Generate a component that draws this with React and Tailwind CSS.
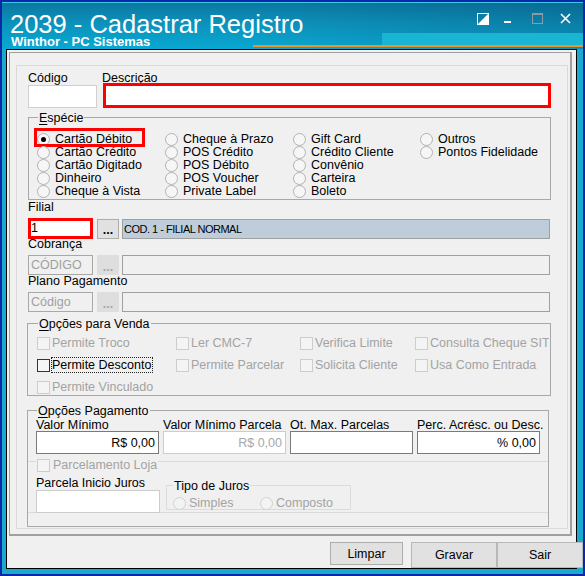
import React from "react";

function Legend({ children, className = "" }) {
  return (
    <div className={`-mt-[7px] h-[14px] w-fit px-[1px] bg-[#f0f0f0] whitespace-nowrap ${className}`}>
      {children}
    </div>
  );
}

function Radio({ checked, disabled }) {
  return (
    <span
      className={`w-[13px] h-[13px] rounded-full border shrink-0 flex items-center justify-center ${
        disabled ? "border-[#d2d2d2] bg-[#f3f3f3]" : "border-[#b2b2b2] bg-[#f6f6f6]"
      }`}
    >
      {checked && <span className="w-[5px] h-[5px] rounded-full bg-black" />}
    </span>
  );
}

function Check({ enabled }) {
  return (
    <span
      className={`w-[13px] h-[13px] border shrink-0 ${
        enabled ? "border-[#333333] bg-[#f6f6f6]" : "border-[#cdcdcd] bg-[#f4f4f4]"
      }`}
    />
  );
}

const especie = [
  { w: "w-[128px]", items: ["Cartão Débito", "Cartão Crédito", "Cartão Digitado", "Dinheiro", "Cheque à Vista"] },
  { w: "w-[128px]", items: ["Cheque à Prazo", "POS Crédito", "POS Débito", "POS Voucher", "Private Label"] },
  { w: "w-[127px]", items: ["Gift Card", "Crédito Cliente", "Convênio", "Carteira", "Boleto"] },
  { w: "w-[120px]", items: ["Outros", "Pontos Fidelidade"] },
];

const venda = [
  { w: "w-[139px]", items: [["Permite Troco", false], ["Permite Desconto", true], ["Permite Vinculado", false]] },
  { w: "w-[124px]", items: [["Ler CMC-7", false], ["Permite Parcelar", false]] },
  { w: "w-[115px]", items: [["Verifica Limite", false], ["Solicita Cliente", false]] },
  { w: "w-[134px] overflow-hidden", items: [["Consulta Cheque SIT", false], ["Usa Como Entrada", false]] },
];

function TitleBar() {
  return (
    <div className="h-[47px] flex border-t border-[#3cc8e6] bg-[linear-gradient(90deg,rgba(0,0,0,0)_45%,rgba(0,30,60,0.16)_100%),linear-gradient(180deg,#0b78a2_0%,#0c92bb_45%,#08a8d2_100%)]">
      <div className="w-[251px] pl-[8px] pt-[9px] flex flex-col text-white">
        <div className="text-[25.5px] leading-[24px] whitespace-nowrap">2039 - Cadastrar Registro</div>
        <div className="ml-[1px] text-[13px] leading-[11px] font-bold whitespace-nowrap">
          Winthor - PC Sistemas
        </div>
      </div>
      <div className="flex-1 flex flex-col pt-[10px]">
        <div className="flex items-start h-[12px] ml-[224px]">
          <svg width="12" height="12" viewBox="0 0 12 12" className="shrink-0">
            <polygon points="0,12 12,0 12,12" fill="#ffffff" />
            <rect x="0.5" y="0.5" width="11" height="11" fill="none" stroke="#ffffff" strokeWidth="1" />
          </svg>
          <span className="ml-[15px] mt-[8px] w-[7px] h-[2px] bg-white shrink-0" />
          <svg width="11" height="11" viewBox="0 0 11 11" className="ml-[21px] shrink-0">
            <rect x="0.5" y="0.5" width="10" height="10" fill="none" stroke="#8c9aa2" strokeWidth="1" />
            <rect x="0" y="0" width="11" height="2" fill="#8c9aa2" />
          </svg>
          <svg width="11" height="11" viewBox="0 0 11 11" className="ml-[17px] shrink-0">
            <path d="M1 1 L10 10 M10 1 L1 10" stroke="#ffffff" strokeWidth="1.6" />
          </svg>
        </div>
        <div className="mt-[8px] ml-[129px] h-[12px] bg-[#1ab5d2]" />
        <div className="h-[2px] bg-[#e8962a]" />
      </div>
    </div>
  );
}

export default function App() {
  return (
    <div className="w-[585px] h-[576px] bg-[#0a28a8] p-[2px] font-['Liberation_Sans',Arial,sans-serif] text-[12.5px] leading-[14px] text-black overflow-hidden">
      <div className="w-[581px] h-[572px] bg-[#19aad0] flex flex-col">
        <TitleBar />
        <div className="ml-[4px] w-[571px] h-[520px] border border-black bg-[#f0f0f0] flex flex-col">
          <div className="ml-[2px] mt-[2px] w-[563px] h-[485px] border-l border-t border-r-2 border-b-2 border-[#a0a0a0]">
            <div className="ml-[6px] mt-[12px] w-[552px] h-[464px] border border-[#dadada] flex flex-col">
              {/* Código / Descrição */}
              <div className="flex mt-[5px]">
                <div className="ml-[11px] w-[69px] flex flex-col">
                  <div className="h-[14px] pt-[1px] leading-[13px]">Código</div>
                  <div className="h-[23px] border border-[#d0d0d0] bg-white" />
                </div>
                <div className="ml-[6px] flex flex-col">
                  <div className="h-[12px] -ml-[1px] pt-[1px] leading-[13px]">Descrição</div>
                  <div className="h-[25px] w-[448px] border-[3px] border-[#ff0000] bg-white" />
                </div>
              </div>

              {/* Espécie */}
              <div className="mt-[9px] ml-[11px] w-[523px] h-[83px] border border-[#a8a8a8] flex flex-col">
                <Legend className="ml-[9px]">
                  <span className="underline underline-offset-[2px]">E</span>spécie
                </Legend>
                <div className="flex mt-[8px] pl-[8px]">
                  {especie.map((col, ci) => (
                    <div key={ci} className={`${col.w} flex flex-col`}>
                      {col.items.map((t, i) => (
                        <div key={t} className="relative h-[13px] flex items-center leading-[13px] whitespace-nowrap">
                          <Radio checked={ci === 0 && i === 0} />
                          <span className="ml-[5px]">{t}</span>
                          {ci === 0 && i === 0 && (
                            <span className="absolute -left-[3px] -top-[5px] w-[111px] h-[19px] border-[3px] border-[#ff0000]" />
                          )}
                        </div>
                      ))}
                    </div>
                  ))}
                </div>
              </div>

              {/* Filial */}
              <div className="ml-[11px] h-[14px] pt-[1px] leading-[13px]">Filial</div>
              <div className="mt-[4px] ml-[11px] flex items-end h-[21px]">
                <div className="w-[65px] h-[21px] border-[3px] border-[#ff0000] bg-white flex items-center leading-[13px]">1</div>
                <div className="ml-[4px] w-[22px] h-[20px] bg-[#e1e1e1] border border-[#adadad] flex items-end justify-center pb-[3px] font-bold leading-[10px]">
                  ...
                </div>
                <div className="ml-[3px] w-[428px] h-[20px] bg-[#bfcdda] border border-[#a0a0a0] flex items-center pl-[1px] text-[11px] tracking-[-0.5px] leading-[12px]">
                  COD. 1 - FILIAL NORMAL
                </div>
              </div>

              {/* Cobrança */}
              <div className="-mt-[2px] ml-[11px] h-[14px]">Cobrança</div>
              <div className="mt-[4px] ml-[11px] flex h-[20px]">
                <div className="w-[65px] h-[20px] border border-[#a8a8a8] bg-[#f0f0f0] flex items-center pl-[2px] text-[#a0a0a0] leading-[13px]">
                  CÓDIGO
                </div>
                <div className="ml-[4px] w-[22px] h-[20px] bg-[#dedede] flex items-end justify-center pb-[3px] font-bold leading-[10px] text-[#a8a8a8]">
                  ...
                </div>
                <div className="ml-[3px] w-[428px] h-[20px] bg-[#f0f0f0] border border-[#a0a0a0]" />
              </div>

              {/* Plano Pagamento */}
              <div className="-mt-[1px] ml-[11px] h-[14px]">Plano Pagamento</div>
              <div className="mt-[4px] ml-[11px] flex h-[20px]">
                <div className="w-[65px] h-[20px] border border-[#a8a8a8] bg-[#f0f0f0] flex items-center pl-[2px] text-[#a0a0a0] leading-[13px]">
                  Código
                </div>
                <div className="ml-[4px] w-[22px] h-[20px] bg-[#dedede] flex items-end justify-center pb-[3px] font-bold leading-[10px] text-[#a8a8a8]">
                  ...
                </div>
                <div className="ml-[3px] w-[428px] h-[20px] bg-[#f0f0f0] border border-[#a0a0a0]" />
              </div>

              {/* Opções para Venda */}
              <div className="mt-[11px] ml-[10px] w-[524px] h-[73px] border border-[#a8a8a8] flex flex-col">
                <Legend className="ml-[10px]">
                  <span className="underline underline-offset-[2px]">O</span>pções para Venda
                </Legend>
                <div className="flex mt-[1px] pl-[9px]">
                  {venda.map((col, ci) => (
                    <div key={ci} className={`${col.w} flex flex-col`}>
                      {col.items.map(([t, en]) => (
                        <div key={t} className="h-[22px] flex items-center whitespace-nowrap">
                          <Check enabled={en} />
                          <span
                            className={`ml-[1px] h-[16px] flex items-center border ${
                              en ? "border-dotted border-[#222222] text-black pr-[1px]" : "border-transparent text-[#a3a3a3]"
                            }`}
                          >
                            {t}
                          </span>
                        </div>
                      ))}
                    </div>
                  ))}
                </div>
              </div>

              {/* Opções Pagamento */}
              <div className="mt-[14px] ml-[10px] w-[522px] h-[117px] border border-[#a8a8a8] flex flex-col">
                <Legend className="ml-[9px]">
                  <span className="underline underline-offset-[2px]">O</span>pções Pagamento
                </Legend>
                <div className="flex pl-[8px] gap-[4px]">
                  {[
                    ["Valor Mínimo", "R$ 0,00", "border-[#7a7a7a] text-black"],
                    ["Valor Mínimo Parcela", "R$ 0,00", "border-[#cccccc] text-[#a8a8a8]"],
                    ["Ot. Max. Parcelas", "", "border-[#7a7a7a] text-black"],
                    ["Perc. Acrésc. ou Desc.", "% 0,00", "border-[#7a7a7a] text-black"],
                  ].map(([l, v, c]) => (
                    <div key={l} className="w-[123px] flex flex-col">
                      <div className="h-[13px] whitespace-nowrap">{l}</div>
                      <div className={`h-[23px] border bg-white flex items-center justify-end pr-[3px] ${c}`}>{v}</div>
                    </div>
                  ))}
                </div>

                <div className="mt-[7px] h-[52px] border-y border-[#dadada] flex flex-col">
                  <div className="-mt-[4px] ml-[8px] h-[14px] w-fit px-[1px] bg-[#f0f0f0] flex items-center">
                    <Check />
                    <span className="ml-[3px] text-[#a3a3a3] whitespace-nowrap">Parcelamento Loja</span>
                  </div>
                  <div className="flex items-start mt-[4px]">
                    <div className="ml-[8px] w-[124px] flex flex-col">
                      <div className="h-[14px] whitespace-nowrap">Parcela Inicio Juros</div>
                      <div className="h-[23px] border border-[#cccccc] bg-white" />
                    </div>
                    <div className="ml-[6px] mt-[9px] w-[185px] h-[25px] border border-[#dcdcdc] flex flex-col">
                      <Legend className="ml-[6px]">Tipo de Juros</Legend>
                      <div className="flex mt-[4px] ml-[6px]">
                        <div className="w-[87px] h-[13px] flex items-center text-[#a3a3a3] leading-[13px]">
                          <Radio disabled />
                          <span className="ml-[3px]">Simples</span>
                        </div>
                        <div className="h-[13px] flex items-center text-[#a3a3a3] leading-[13px]">
                          <Radio disabled />
                          <span className="ml-[3px]">Composto</span>
                        </div>
                      </div>
                    </div>
                  </div>
                </div>
              </div>
            </div>
          </div>

          {/* Buttons */}
          <div className="flex items-start mt-[6px] ml-[323px]">
            <div className="w-[73px] h-[23px] bg-[#e1e1e1] border border-[#adadad] flex items-center justify-center shrink-0">
              Limpar
            </div>
            <div className="ml-[8px] w-[86px] h-[26px] bg-[#e1e1e1] border border-[#b8b8b8] flex items-center justify-center shrink-0">
              Gravar
            </div>
            <div className="w-[86px] h-[26px] bg-[#e1e1e1] border border-[#b8b8b8] flex items-center justify-center shrink-0">
              Sair
            </div>
          </div>
        </div>
      </div>
    </div>
  );
}
